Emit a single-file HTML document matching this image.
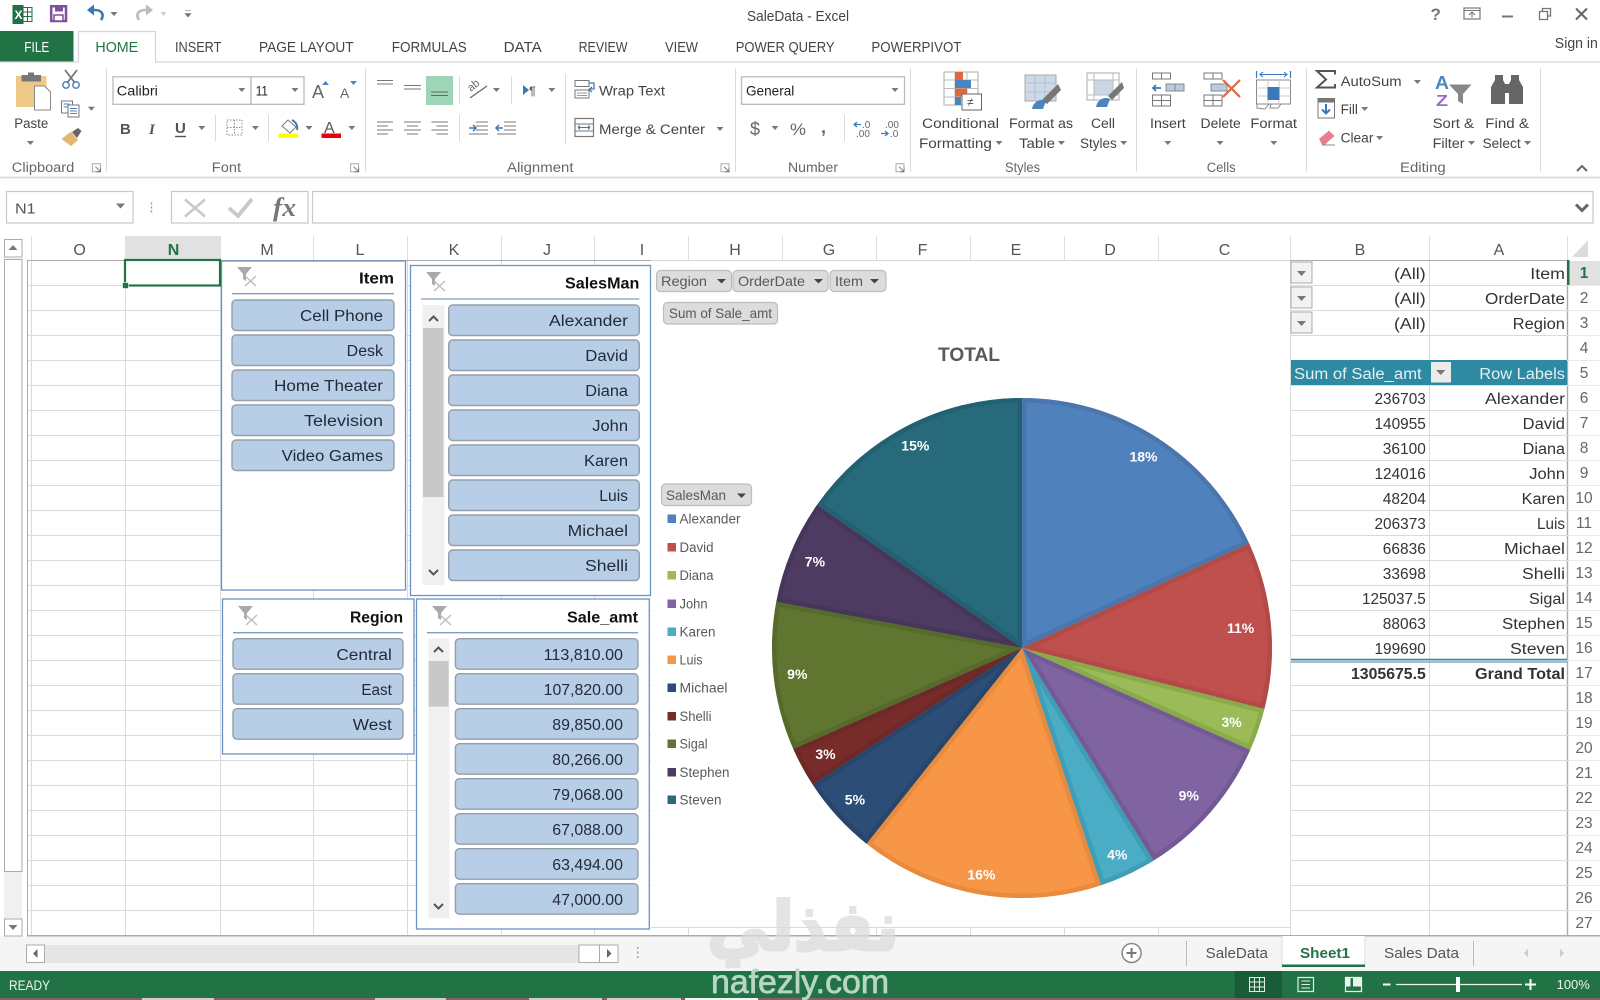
<!DOCTYPE html>
<html lang="en"><head><meta charset="utf-8"><title>SaleData - Excel</title>
<style>
html,body{margin:0;padding:0;background:#fff;width:1600px;height:1000px;overflow:hidden}
svg{display:block}
text{font-family:"Liberation Sans",sans-serif;white-space:pre}
.t{font-size:14.5px;fill:#444}
.r{font-size:13.5px;fill:#444}
.g{font-size:13.5px;fill:#666}
.c{font-size:15.5px;fill:#333}
.h{font-size:16px;fill:#555;text-anchor:middle}
.n{font-size:15.5px;fill:#666;text-anchor:middle}
.b{font-size:15.5px;fill:#222b3b}
.sh{font-size:15.5px;font-weight:bold;fill:#111}
.pb{font-size:14px;fill:#595959}
.l{font-size:13.5px;fill:#595959}
.p{font-size:14px;font-weight:bold;fill:#fff;text-anchor:middle}
.btn{fill:#b8cde6;stroke:#949fab;stroke-width:1.4}
.gb{fill:#dcdcdc;stroke:#bdbdbd;stroke-width:1.2}
.i{fill:none;stroke:#777;stroke-width:1.3}
</style></head><body>
<svg width="1600" height="1000" viewBox="0 0 1600 1000" xmlns="http://www.w3.org/2000/svg">
<defs>
<path id="dn" d="M-3.5-2h7L0 2z" fill="#777"/>
<g id="fl"><path d="M0 0H15L9 7V14L6 12V7Z" fill="#a9a9a9"/><path d="M8 9L19 19M19 9L8 19" stroke="#bdbdbd" stroke-width="1.4"/></g>
<g id="lnch"><path d="M-4-4H4V4H-4Z" fill="none" stroke="#aaa"/><path d="M-1-1L4 4M4 0V4H0" stroke="#777" fill="none"/></g>
<g id="fb"><rect width="21" height="21" fill="#f2f2f2" stroke="#ababab"/><path d="M6 9h9l-4.500 5z" fill="#777"/></g>
<path id="p1" d="M1022 648L1022 398A250 250 0 0 1 1249.1 543.4Z"/>
<path id="p2" d="M1022 648L1249.1 543.4A250 250 0 0 1 1264.4 709Z"/>
<path id="p3" d="M1022 648L1264.4 709A250 250 0 0 1 1250.2 750Z"/>
<path id="p4" d="M1022 648L1250.2 750A250 250 0 0 1 1153.5 860.6Z"/>
<path id="p5" d="M1022 648L1153.5 860.6A250 250 0 0 1 1101.1 885.2Z"/>
<path id="p6" d="M1022 648L1101.1 885.2A250 250 0 0 1 866.5 843.7Z"/>
<path id="p7" d="M1022 648L866.500 843.7A250 250 0 0 1 812.6 784.5Z"/>
<path id="p8" d="M1022 648L812.6 784.5A250 250 0 0 1 793.3 749Z"/>
<path id="p9" d="M1022 648L793.3 749A250 250 0 0 1 776.3 601.7Z"/>
<path id="p10" d="M1022 648L776.3 601.7A250 250 0 0 1 817.1 504.8Z"/>
<path id="p11" d="M1022 648L817.1 504.8A250 250 0 0 1 1022 398Z"/>
<clipPath id="c1"><use href="#p1"/></clipPath><clipPath id="c2"><use href="#p2"/></clipPath><clipPath id="c3"><use href="#p3"/></clipPath><clipPath id="c4"><use href="#p4"/></clipPath><clipPath id="c5"><use href="#p5"/></clipPath><clipPath id="c6"><use href="#p6"/></clipPath><clipPath id="c7"><use href="#p7"/></clipPath><clipPath id="c8"><use href="#p8"/></clipPath><clipPath id="c9"><use href="#p9"/></clipPath><clipPath id="c10"><use href="#p10"/></clipPath><clipPath id="c11"><use href="#p11"/></clipPath>
</defs>
<rect width="1600" height="1000" fill="#fff"/>

<!-- title bar icons -->
<rect x="12.500" y="5" width="11" height="19" fill="#1f7244"/><rect x="23" y="7.500" width="9" height="14" fill="#fff" stroke="#1f7244"/><path d="M23 12h9M23 16.500h9M27.500 7.500v14" stroke="#1f7244"/>
<text x="14.500" y="19" style="font-size:12px;font-weight:bold;fill:#fff">X</text>
<path d="M51.200 6.200H66V21H51.200Z" fill="#fff" stroke="#7f4f9f" stroke-width="2.500"/><rect x="55" y="6" width="8" height="5.500" fill="#7f4f9f"/><rect x="54" y="15" width="9" height="6" fill="#fff" stroke="#7f4f9f" stroke-width="1.500"/>
<path d="M101 20C105 14 101 10 95 10H90" fill="none" stroke="#3b78b5" stroke-width="2.600"/><path d="M87 10L94 4.500V15.500Z" fill="#3b78b5"/>
<use href="#dn" x="114" y="14"/>
<path d="M139 20C135 14 139 10 145 10H150" fill="none" stroke="#bbb" stroke-width="2.600"/><path d="M153 10L146 4.500V15.500Z" fill="#bbb"/>
<path d="M160.500 12h6l-3 4z" fill="#ccc"/>
<path d="M185 10.500h6M185 13.500h6l-3 3.500z" fill="#777" stroke="#777" stroke-width=".6"/>
<text x="747" y="21" class="t" textLength="102" lengthAdjust="spacingAndGlyphs">SaleData - Excel</text>

<text x="1430.500" y="20" style="font-size:17px;font-weight:bold;fill:#777">?</text>
<rect x="1464" y="8" width="16" height="11" fill="none" stroke="#777" stroke-width="1.200"/><path d="M1464 10.500H1480" stroke="#777"/><path d="M1472 17.500V12.500M1469 15l3-3 3 3" stroke="#777" fill="none"/>
<rect x="1502" y="15.500" width="11" height="2" fill="#777"/>
<rect x="1539.500" y="11.500" width="8" height="8" fill="#fff" stroke="#777" stroke-width="1.300"/><path d="M1542.500 11V8.500H1550.500V16H1548" fill="none" stroke="#777" stroke-width="1.300"/>
<path d="M1576 8.500L1587 19.500M1587 8.500L1576 19.500" stroke="#666" stroke-width="2"/>

<!-- tabs -->
<rect x="0" y="31" width="73.500" height="31" fill="#217346"/>
<text x="24.300" y="52" style="font-size:14.500px;fill:#fff" textLength="25" lengthAdjust="spacingAndGlyphs">FILE</text>
<path d="M0 62H1600" stroke="#d4d4d4" stroke-width="1.300"/>
<path d="M78.500 62V31.500H155.500V62" fill="#fff" stroke="#d4d4d4" stroke-width="1.200"/><rect x="79" y="60" width="76" height="3" fill="#fff"/>
<text x="95.400" y="52" style="font-size:14.500px;fill:#217346" textLength="42.800" lengthAdjust="spacingAndGlyphs">HOME</text>
<text x="175" y="52" class="t" textLength="46.400" lengthAdjust="spacingAndGlyphs">INSERT</text>
<text x="259" y="52" class="t" textLength="94.600" lengthAdjust="spacingAndGlyphs">PAGE LAYOUT</text>
<text x="391.800" y="52" class="t" textLength="75" lengthAdjust="spacingAndGlyphs">FORMULAS</text>
<text x="503.600" y="52" class="t" textLength="38.200" lengthAdjust="spacingAndGlyphs">DATA</text>
<text x="578.600" y="52" class="t" textLength="48.900" lengthAdjust="spacingAndGlyphs">REVIEW</text>
<text x="665" y="52" class="t" textLength="33" lengthAdjust="spacingAndGlyphs">VIEW</text>
<text x="735.700" y="52" class="t" textLength="98.900" lengthAdjust="spacingAndGlyphs">POWER QUERY</text>
<text x="871.400" y="52" class="t" textLength="90" lengthAdjust="spacingAndGlyphs">POWERPIVOT</text>
<text x="1554.800" y="48" class="t" textLength="43.100" lengthAdjust="spacingAndGlyphs">Sign in</text>

<!-- ribbon separators -->
<path d="M106.500 68V172M365.500 68V172M735.500 68V172M910.500 68V172M1136.500 68V172M1306.500 68V172M1540.500 68V172" stroke="#dcdcdc"/>
<path d="M215.500 115V141M268.500 115V141M459.500 76V104M459.500 115V141M511.500 76V104M565.500 74V144M844.500 115V141" stroke="#dcdcdc"/>
<path d="M0 177.500H1600" stroke="#d9d9d9" stroke-width="1.800"/>

<!-- clipboard -->
<rect x="16" y="76" width="30.500" height="31" rx="1" fill="#edc987"/><rect x="21.500" y="75" width="19.500" height="6.500" fill="#777"/><rect x="28" y="72.500" width="6" height="4" fill="#777"/>
<path d="M34.500 86H44.500L50.500 92V110H34.500Z" fill="#fff" stroke="#888"/>
<text x="14.300" y="128" class="r" textLength="33.900" lengthAdjust="spacingAndGlyphs">Paste</text>
<use href="#dn" x="30.400" y="143"/>
<path d="M65 70L75 83M77 70L67 83" stroke="#777" stroke-width="1.800"/><circle cx="66" cy="85" r="3.200" fill="none" stroke="#4c84bd" stroke-width="1.500"/><circle cx="76" cy="85" r="3.200" fill="none" stroke="#4c84bd" stroke-width="1.500"/>
<rect x="61.500" y="101" width="11" height="12" fill="#fff" stroke="#777"/><rect x="68" y="105" width="11" height="12" fill="#fff" stroke="#777"/><path d="M70 108.500h7M70 111h7M70 113.500h7M63.500 104h6M63.500 107h4" stroke="#4c84bd"/>
<use href="#dn" x="91.400" y="108.700"/>
<path d="M61.500 139L71 131.500L78 140L71 146Z" fill="#e2b772"/><path d="M72 132L78 128L81.500 131L77 138Z" fill="#666"/>
<text x="11.800" y="172" class="g" textLength="62.500" lengthAdjust="spacingAndGlyphs">Clipboard</text>
<use href="#lnch" x="96.400" y="167.700"/>

<!-- font -->
<rect x="113" y="76.800" width="138" height="27.500" fill="#fff" stroke="#bbb" stroke-width="1.300"/>
<rect x="251" y="76.800" width="53" height="27.500" fill="#fff" stroke="#bbb" stroke-width="1.300"/>
<text x="116.800" y="95.500" style="font-size:14px;fill:#222" textLength="41.100" lengthAdjust="spacingAndGlyphs">Calibri</text>
<text x="255.700" y="95.500" style="font-size:14px;fill:#222" textLength="12.200" lengthAdjust="spacingAndGlyphs">11</text>
<use href="#dn" x="241.800" y="90"/><use href="#dn" x="295" y="90"/>
<text x="312" y="98" style="font-size:18px;fill:#666">A</text><path d="M322 85h7l-3.500-4z" fill="#4c84bd"/>
<text x="340" y="98" style="font-size:14px;fill:#666">A</text><path d="M350 81h7l-3.500 4z" fill="#4c84bd"/>
<text x="120" y="134" style="font-size:15px;font-weight:bold;fill:#555">B</text>
<text x="149" y="134" style="font-size:15px;font-style:italic;font-family:'Liberation Serif',serif;font-weight:bold;fill:#555">I</text>
<text x="175" y="133" style="font-size:15px;font-weight:bold;fill:#555">U</text><path d="M175 136.500h11" stroke="#555" stroke-width="1.400"/>
<use href="#dn" x="201.800" y="128"/>
<rect x="227" y="120" width="15" height="15" fill="none" stroke="#888" stroke-dasharray="1.500 1.500"/><path d="M234.500 120V135M227 127.500H242" stroke="#888" stroke-dasharray="1.500 1.500"/>
<use href="#dn" x="255.400" y="128"/>
<path d="M282 126L288 120L296 127L290 133Z" fill="#fff" stroke="#777"/><path d="M292 120C296 122 298 126 297 130" fill="none" stroke="#3b78b5" stroke-width="2"/>
<rect x="278.500" y="133.500" width="19.500" height="4.500" fill="#ffff00"/>
<use href="#dn" x="309" y="128"/>
<text x="324" y="133" style="font-size:16px;fill:#555">A</text><rect x="321.500" y="133.500" width="19.500" height="4.500" fill="#e8000f"/>
<use href="#dn" x="351.800" y="128"/>
<text x="211.800" y="172" class="g" textLength="29.200" lengthAdjust="spacingAndGlyphs">Font</text>
<use href="#lnch" x="354.600" y="167.700"/>

<!-- alignment -->
<path d="M377 80.500h16M377 84h16" stroke="#777" stroke-width="1.100"/>
<path d="M404 85.500h17M404 89h17" stroke="#777" stroke-width="1.100"/>
<rect x="426" y="76" width="27" height="29" fill="#9fd5b7"/><path d="M431 92h17M431 95.500h17" stroke="#666" stroke-width="1.100"/>
<text transform="translate(471 92) rotate(-40)" style="font-size:11px;fill:#666">ab</text><path d="M470 98L487 86" stroke="#666" stroke-width="1.300"/>
<use href="#dn" x="496.400" y="90"/>
<path d="M523 85V95L529 90Z" fill="#3b78b5"/><text x="529" y="95" style="font-size:12px;fill:#666;font-weight:bold">¶</text>
<use href="#dn" x="551.800" y="90"/>
<path d="M377 122h16M377 126h11M377 130h16M377 134h11" stroke="#777" stroke-width="1.100"/>
<path d="M404 122h17M407 126h11M404 130h17M407 134h11" stroke="#777" stroke-width="1.100"/>
<path d="M431.500 122h16.500M436.500 126h11.500M431.500 130h16.500M436.500 134h11.500" stroke="#777" stroke-width="1.100"/>
<path d="M476 122h12M476 126h12M476 130h12M469 134h19" stroke="#777" stroke-width="1.100"/><path d="M469 128h6M473 125l3 3-3 3" stroke="#3b78b5" stroke-width="1.500" fill="none"/>
<path d="M504 122h12M504 126h12M504 130h12M497 134h19" stroke="#777" stroke-width="1.100"/><path d="M497 128h6M499 125l-3 3 3 3" stroke="#3b78b5" stroke-width="1.500" fill="none"/>
<rect x="575" y="80.500" width="14" height="6" fill="#fff" stroke="#777"/><rect x="575" y="90" width="14" height="8" fill="#fff" stroke="#777"/><path d="M577 93h10M577 95.500h10" stroke="#999"/><path d="M589 83h5v6h-4M592 87l-3 2.500 3 2.500" fill="none" stroke="#3b78b5" stroke-width="1.300"/>
<text x="599" y="95.500" class="r" textLength="66" lengthAdjust="spacingAndGlyphs">Wrap Text</text>
<rect x="575" y="118.500" width="18.500" height="18" fill="#fff" stroke="#777" stroke-width="1.200"/><path d="M575 124h18.500M575 131h18.500" stroke="#777"/><path d="M578 127.500h12M578 127.500l2-2m-2 2l2 2M590 127.500l-2-2m2 2l-2 2" stroke="#3b78b5"/>
<text x="599" y="134" class="r" textLength="106" lengthAdjust="spacingAndGlyphs">Merge &amp; Center</text>
<use href="#dn" x="720" y="129"/>
<text x="507" y="172" class="g" textLength="66.500" lengthAdjust="spacingAndGlyphs">Alignment</text>
<use href="#lnch" x="725" y="167.700"/>

<!-- number -->
<rect x="741.500" y="76.800" width="163" height="27.500" fill="#fff" stroke="#bbb" stroke-width="1.300"/>
<text x="746" y="95.500" style="font-size:14px;fill:#222" textLength="48.300" lengthAdjust="spacingAndGlyphs">General</text>
<use href="#dn" x="895" y="90"/>
<text x="750" y="135" style="font-size:18px;fill:#666">$</text><use href="#dn" x="775" y="128"/>
<text x="790" y="135" style="font-size:17px;fill:#666" textLength="16" lengthAdjust="spacingAndGlyphs">%</text>
<text x="821" y="133" style="font-size:18px;font-weight:bold;fill:#666">,</text>
<text x="862" y="128" style="font-size:10px;fill:#666">.0</text><text x="856" y="137" style="font-size:10px;fill:#666">.00</text><path d="M854 124.500h7M857 122l-3 2.500 3 2.500" stroke="#3b78b5" fill="none" stroke-width="1.200"/>
<text x="885" y="128" style="font-size:10px;fill:#666">.00</text><text x="890" y="137" style="font-size:10px;fill:#666">.0</text><path d="M881 133.500h7M885 131l3 2.500-3 2.500" stroke="#3b78b5" fill="none" stroke-width="1.200"/>
<text x="788" y="172" class="g" textLength="50" lengthAdjust="spacingAndGlyphs">Number</text>
<use href="#lnch" x="900" y="167.700"/>

<!-- styles -->
<rect x="944" y="72" width="34" height="33" fill="#fff" stroke="#aaa"/><path d="M955 72V105M967 72V105M944 80h34M944 88.500h34M944 97h34" stroke="#bbb"/>
<rect x="955" y="72" width="8" height="8" fill="#e0683f"/><rect x="955" y="80" width="16" height="8" fill="#4c84bd"/><rect x="955" y="88.500" width="12" height="8" fill="#e0683f"/><rect x="955" y="97" width="6" height="8" fill="#4c84bd"/>
<rect x="962" y="94" width="19.500" height="16" fill="#fff" stroke="#666"/><text x="967" y="106" style="font-size:12px;fill:#555">≠</text>
<text x="922" y="128" class="r" textLength="77" lengthAdjust="spacingAndGlyphs">Conditional</text>
<text x="919" y="148" class="r" textLength="72.800" lengthAdjust="spacingAndGlyphs">Formatting</text><use href="#dn" x="999" y="143"/>
<rect x="1025" y="75" width="31" height="26" fill="#ccd9e8" stroke="#aaa"/><path d="M1035 75V101M1045 75V101M1025 83h31M1025 92h31" stroke="#b7c1cf"/>
<path d="M1058 84L1042 100L1047 104L1061 90Z" fill="#777"/><path d="M1032 109C1033 102 1040 98 1046 101L1043 109Z" fill="#4c84bd"/>
<text x="1009" y="128" class="r" textLength="64" lengthAdjust="spacingAndGlyphs">Format as</text>
<text x="1019" y="148" class="r" textLength="36" lengthAdjust="spacingAndGlyphs">Table</text><use href="#dn" x="1061.400" y="143"/>
<rect x="1087" y="73" width="32" height="27" fill="#fff" stroke="#aaa"/><rect x="1094" y="80" width="19" height="15" fill="#c8d6e6"/><path d="M1094 73V100M1113 73V100M1087 80h32M1087 95h32" stroke="#bbb"/>
<path d="M1122 82L1108 96L1112 100L1124 88Z" fill="#777"/><path d="M1096 107C1097 100 1104 96 1110 99L1107 107Z" fill="#4c84bd"/>
<text x="1091" y="128" class="r" textLength="24" lengthAdjust="spacingAndGlyphs">Cell</text>
<text x="1080" y="148" class="r" textLength="36.800" lengthAdjust="spacingAndGlyphs">Styles</text><use href="#dn" x="1123.700" y="143"/>
<text x="1005" y="172" class="g" textLength="35" lengthAdjust="spacingAndGlyphs">Styles</text>

<!-- cells -->
<path d="M1152.500 73h18v6h-18zM1161.500 73v6M1152.500 95h18v11h-18zM1161.500 95v11M1152.500 100.500h18" fill="#fff" stroke="#777"/>
<rect x="1166" y="84" width="18" height="7" fill="#b9cbe0" stroke="#888"/><path d="M1175 84v7" stroke="#888"/><path d="M1153 88h8M1156 85l-3 3 3 3" fill="none" stroke="#3b78b5" stroke-width="1.800"/>
<text x="1150" y="128" class="r" textLength="35.700" lengthAdjust="spacingAndGlyphs">Insert</text><use href="#dn" x="1167.800" y="143"/>
<path d="M1204 73h18v6h-18zM1213 73v6M1204 95h18v11h-18zM1213 95v11M1204 100.500h18" fill="#fff" stroke="#777"/>
<rect x="1211" y="84" width="16" height="7" fill="#b9cbe0" stroke="#888"/><path d="M1223 80L1240 97M1240 80L1223 97" stroke="#e0683f" stroke-width="2.200"/>
<text x="1200.500" y="128" class="r" textLength="40.300" lengthAdjust="spacingAndGlyphs">Delete</text><use href="#dn" x="1220" y="143"/>
<path d="M1256.500 71v7M1290.500 71v7" stroke="#3b78b5" stroke-width="1.200"/><path d="M1260 74.500h27M1263 72l-3 2.500 3 2.500M1284 72l3 2.500-3 2.500" stroke="#3b78b5" fill="none" stroke-width="1.100"/>
<rect x="1256.500" y="80" width="34" height="24" fill="#fff" stroke="#888"/><path d="M1268 80V104M1279 80V104M1256.500 88h34M1256.500 96h34" stroke="#ccc"/><rect x="1267.500" y="87" width="12" height="13" fill="#3b78b5"/>
<path d="M1257 104v4l8 1 4-5M1271 104l-1 4h8l3-4" fill="none" stroke="#888"/>
<text x="1250.400" y="128" class="r" textLength="46.600" lengthAdjust="spacingAndGlyphs">Format</text><use href="#dn" x="1273.800" y="143"/>
<text x="1206.700" y="172" class="g" textLength="28.900" lengthAdjust="spacingAndGlyphs">Cells</text>

<!-- editing -->
<path d="M1335 74.500V71H1317L1326 79.500L1317 87.500H1335V84" fill="none" stroke="#555" stroke-width="2"/>
<text x="1340.600" y="86" class="r" textLength="61" lengthAdjust="spacingAndGlyphs">AutoSum</text><use href="#dn" x="1417.400" y="82"/>
<rect x="1318" y="98.500" width="16.500" height="19.500" fill="#fff" stroke="#777"/><rect x="1318" y="98.500" width="16.500" height="4" fill="#777"/><path d="M1326 104v9M1322 109.500l4 4 4-4" fill="none" stroke="#3b78b5" stroke-width="2"/>
<text x="1340.600" y="114" class="r" textLength="17.300" lengthAdjust="spacingAndGlyphs">Fill</text><use href="#dn" x="1364.700" y="109"/>
<path d="M1319 139L1329 130.500L1334.500 136L1325 144.500H1322Z" fill="#e97d92"/><path d="M1322 145h13" stroke="#888"/>
<text x="1340.600" y="142.500" class="r" textLength="32.800" lengthAdjust="spacingAndGlyphs">Clear</text><use href="#dn" x="1379.600" y="138"/>
<text x="1435" y="89" style="font-size:18px;font-weight:bold;fill:#4c84bd" textLength="14" lengthAdjust="spacingAndGlyphs">A</text>
<text x="1436" y="106" style="font-size:16px;font-weight:bold;fill:#9b6cc0" textLength="12" lengthAdjust="spacingAndGlyphs">Z</text>
<path d="M1449 84.500H1471.500L1463 94V104L1458 101V94Z" fill="#888"/>
<text x="1432.600" y="128" class="r" textLength="41.400" lengthAdjust="spacingAndGlyphs">Sort &amp;</text>
<text x="1432.600" y="148" class="r" textLength="32" lengthAdjust="spacingAndGlyphs">Filter</text><use href="#dn" x="1471.500" y="143"/>
<path d="M1491 104V87L1495 80V75H1503V80L1505 84V104ZM1509 104V84L1511 80V75H1519V80L1523 87V104Z" fill="#666"/><rect x="1505" y="84" width="4" height="9" fill="#666"/>
<text x="1485.300" y="128" class="r" textLength="43.700" lengthAdjust="spacingAndGlyphs">Find &amp;</text>
<text x="1482.500" y="148" class="r" textLength="38.200" lengthAdjust="spacingAndGlyphs">Select</text><use href="#dn" x="1527.600" y="143"/>
<text x="1400" y="172" class="g" textLength="45.700" lengthAdjust="spacingAndGlyphs">Editing</text>
<path d="M1577 171l5-5 5 5" fill="none" stroke="#666" stroke-width="2"/>

<!-- formula bar -->
<rect x="6.500" y="191.500" width="126.500" height="31.500" fill="#fff" stroke="#c8c8c8" stroke-width="1.200"/>
<text x="15" y="213.500" style="font-size:15px;fill:#555" textLength="20.700" lengthAdjust="spacingAndGlyphs">N1</text>
<path d="M116 203.500h9l-4.500 5z" fill="#777"/>
<path d="M151.500 202.500v2M151.500 206.500v2M151.500 210.500v2" stroke="#999" stroke-width="1.400"/>
<rect x="171.500" y="191.500" width="136.500" height="31.500" fill="#fff" stroke="#c8c8c8" stroke-width="1.200"/>
<path d="M185 199.500L205 216.500M205 199.500L185 216.500" stroke="#c8c8c8" stroke-width="2.600"/>
<path d="M229 208L238 216L252 199" fill="none" stroke="#c8c8c8" stroke-width="3.800"/>
<text x="273" y="216" style="font-family:'Liberation Serif',serif;font-style:italic;font-weight:bold;font-size:26px;fill:#777" textLength="23" lengthAdjust="spacingAndGlyphs">fx</text>
<rect x="312.500" y="191.500" width="1280.500" height="31.500" fill="#fff" stroke="#c8c8c8" stroke-width="1.200"/>
<path d="M1576 204.500l6 6 6-6" fill="none" stroke="#666" stroke-width="3"/>

<!-- column headers -->
<rect x="125" y="236" width="95" height="24" fill="#e1e1e1"/>
<path d="M31.500 236V260M125.500 236V260M220.500 236V260M313.500 236V260M407.500 236V260M501.500 236V260M594.500 236V260M688.500 236V260M782.500 236V260M876.500 236V260M970.500 236V260M1064.500 236V260M1158.500 236V260M1290.500 236V260M1429.500 236V260M1567.500 236V260" stroke="#dedede"/>
<text x="79.600" y="255" class="h">O</text><text x="173.500" y="255" class="h" style="font-weight:bold;fill:#217346">N</text><text x="267" y="255" class="h">M</text><text x="360" y="255" class="h">L</text><text x="454" y="255" class="h">K</text><text x="547" y="255" class="h">J</text><text x="642" y="255" class="h">I</text><text x="735" y="255" class="h">H</text><text x="829" y="255" class="h">G</text><text x="922.500" y="255" class="h">F</text><text x="1016" y="255" class="h">E</text><text x="1110" y="255" class="h">D</text><text x="1224.500" y="255" class="h">C</text><text x="1360" y="255" class="h">B</text><text x="1499" y="255" class="h">A</text>
<path d="M1572 257H1588V240Z" fill="#dcdcdc"/>

<!-- grid -->
<path d="M27 285.500H1567M27 310.500H1567M27 335.500H1567M27 360.500H1567M27 385.500H1567M27 410.500H1567M27 435.500H1567M27 460.500H1567M27 485.500H1567M27 510.500H1567M27 535.500H1567M27 560.500H1567M27 585.500H1567M27 610.500H1567M27 635.500H1567M27 660.500H1567M27 685.500H1567M27 710.500H1567M27 735.500H1567M27 760.500H1567M27 785.500H1567M27 810.500H1567M27 835.500H1567M27 860.500H1567M27 885.500H1567M27 910.500H1567" stroke="#dadada"/>
<path d="M31.500 260V935M125.500 260V935M220.500 260V935M313.500 260V935M407.500 260V935M501.500 260V935M594.500 260V935M688.500 260V935M782.500 260V935M876.500 260V935M970.500 260V935M1064.500 260V935M1158.500 260V935M1290.500 260V935M1429.500 260V935" stroke="#dadada"/>
<path d="M27.500 260V936" stroke="#ababab"/>
<path d="M27 260.500H1567" stroke="#ababab"/>
<path d="M1567.500 260V936" stroke="#ababab" stroke-width="1.400"/>
<path d="M27 935.800H1600" stroke="#ababab" stroke-width="1.500"/>
<!-- left scrollbar -->
<rect x="4" y="258" width="18" height="661" fill="#f0f0f0"/>
<rect x="4.500" y="259.500" width="17.500" height="612" fill="#fff" stroke="#ababab"/>
<rect x="4.500" y="239.500" width="17.500" height="17.500" fill="#fff" stroke="#ababab"/><path d="M8.500 250h9L13 245z" fill="#777"/>
<rect x="4.500" y="919" width="17.500" height="17" fill="#fff" stroke="#ababab"/><path d="M8.500 925h9L13 930z" fill="#777"/>

<!-- row headers -->
<path d="M1567 285.500H1600M1567 310.500H1600M1567 335.500H1600M1567 360.500H1600M1567 385.500H1600M1567 410.500H1600M1567 435.500H1600M1567 460.500H1600M1567 485.500H1600M1567 510.500H1600M1567 535.500H1600M1567 560.500H1600M1567 585.500H1600M1567 610.500H1600M1567 635.500H1600M1567 660.500H1600M1567 685.500H1600M1567 710.500H1600M1567 735.500H1600M1567 760.500H1600M1567 785.500H1600M1567 810.500H1600M1567 835.500H1600M1567 860.500H1600M1567 885.500H1600M1567 910.500H1600" stroke="#eaeaea"/>
<rect x="1568" y="261" width="32" height="24" fill="#e1e1e1"/><rect x="1567" y="260" width="2.500" height="25" fill="#217346"/>
<text x="1584" y="278" class="n" style="font-weight:bold;fill:#217346">1</text>
<text x="1584" y="303" class="n">2</text><text x="1584" y="328" class="n">3</text><text x="1584" y="353" class="n">4</text><text x="1584" y="378" class="n">5</text><text x="1584" y="403" class="n">6</text><text x="1584" y="428" class="n">7</text><text x="1584" y="453" class="n">8</text><text x="1584" y="478" class="n">9</text><text x="1584" y="503" class="n">10</text><text x="1584" y="528" class="n">11</text><text x="1584" y="553" class="n">12</text><text x="1584" y="578" class="n">13</text><text x="1584" y="603" class="n">14</text><text x="1584" y="628" class="n">15</text><text x="1584" y="653" class="n">16</text><text x="1584" y="678" class="n">17</text><text x="1584" y="703" class="n">18</text><text x="1584" y="728" class="n">19</text><text x="1584" y="753" class="n">20</text><text x="1584" y="778" class="n">21</text><text x="1584" y="803" class="n">22</text><text x="1584" y="828" class="n">23</text><text x="1584" y="853" class="n">24</text><text x="1584" y="878" class="n">25</text><text x="1584" y="903" class="n">26</text><text x="1584" y="928" class="n">27</text>

<!-- pivot data -->
<use href="#fb" x="1291" y="262"/><use href="#fb" x="1291" y="287"/><use href="#fb" x="1291" y="312"/>
<text x="1394" y="279" class="c" textLength="31.700" lengthAdjust="spacingAndGlyphs">(All)</text>
<text x="1394" y="304" class="c" textLength="31.700" lengthAdjust="spacingAndGlyphs">(All)</text>
<text x="1394" y="329" class="c" textLength="31.700" lengthAdjust="spacingAndGlyphs">(All)</text>
<text x="1530.300" y="279" class="c" textLength="34.700" lengthAdjust="spacingAndGlyphs">Item</text>
<text x="1485" y="304" class="c" textLength="80" lengthAdjust="spacingAndGlyphs">OrderDate</text>
<text x="1512.700" y="329" class="c" textLength="52.300" lengthAdjust="spacingAndGlyphs">Region</text>
<rect x="1291" y="360" width="276" height="25" fill="#2e8aa3"/>
<text x="1294" y="379" style="font-size:15.5px;fill:#e4f0f4" textLength="127.700" lengthAdjust="spacingAndGlyphs">Sum of Sale_amt</text>
<rect x="1431" y="362" width="20" height="20.500" fill="#ececec"/><path d="M1436 370h9.500l-4.750 5z" fill="#777"/>
<text x="1479.300" y="379" style="font-size:15.5px;fill:#e4f0f4" textLength="85.700" lengthAdjust="spacingAndGlyphs">Row Labels</text>
<text x="1374.500" y="404" class="c" textLength="51.300" lengthAdjust="spacingAndGlyphs">236703</text><text x="1485" y="404" class="c" textLength="80" lengthAdjust="spacingAndGlyphs">Alexander</text>
<text x="1374.500" y="429" class="c" textLength="51.300" lengthAdjust="spacingAndGlyphs">140955</text><text x="1522.700" y="429" class="c" textLength="42.300" lengthAdjust="spacingAndGlyphs">David</text>
<text x="1382.800" y="454" class="c" textLength="43" lengthAdjust="spacingAndGlyphs">36100</text><text x="1522.700" y="454" class="c" textLength="42.300" lengthAdjust="spacingAndGlyphs">Diana</text>
<text x="1374.500" y="479" class="c" textLength="51.300" lengthAdjust="spacingAndGlyphs">124016</text><text x="1529.300" y="479" class="c" textLength="35.700" lengthAdjust="spacingAndGlyphs">John</text>
<text x="1382.800" y="504" class="c" textLength="43" lengthAdjust="spacingAndGlyphs">48204</text><text x="1521.700" y="504" class="c" textLength="43.300" lengthAdjust="spacingAndGlyphs">Karen</text>
<text x="1374.500" y="529" class="c" textLength="51.300" lengthAdjust="spacingAndGlyphs">206373</text><text x="1537" y="529" class="c" textLength="28" lengthAdjust="spacingAndGlyphs">Luis</text>
<text x="1382.800" y="554" class="c" textLength="43" lengthAdjust="spacingAndGlyphs">66836</text><text x="1504" y="554" class="c" textLength="61" lengthAdjust="spacingAndGlyphs">Michael</text>
<text x="1382.800" y="579" class="c" textLength="43" lengthAdjust="spacingAndGlyphs">33698</text><text x="1522" y="579" class="c" textLength="43" lengthAdjust="spacingAndGlyphs">Shelli</text>
<text x="1362" y="604" class="c" textLength="63.800" lengthAdjust="spacingAndGlyphs">125037.5</text><text x="1529" y="604" class="c" textLength="36" lengthAdjust="spacingAndGlyphs">Sigal</text>
<text x="1382.800" y="629" class="c" textLength="43" lengthAdjust="spacingAndGlyphs">88063</text><text x="1502" y="629" class="c" textLength="63" lengthAdjust="spacingAndGlyphs">Stephen</text>
<text x="1374.500" y="654" class="c" textLength="51.300" lengthAdjust="spacingAndGlyphs">199690</text><text x="1510" y="654" class="c" textLength="55" lengthAdjust="spacingAndGlyphs">Steven</text>
<path d="M1291 659.500H1567" stroke="#2e8aa3" stroke-width="1.400"/><path d="M1291 662H1567" stroke="#2e8aa3"/>
<text x="1351" y="679" class="c" style="font-weight:bold" textLength="74.800" lengthAdjust="spacingAndGlyphs">1305675.5</text><text x="1475" y="679" class="c" style="font-weight:bold" textLength="90" lengthAdjust="spacingAndGlyphs">Grand Total</text>

<!-- chart -->
<rect x="651" y="260.500" width="639" height="667" fill="#fff"/>
<path d="M651 927.500H1290" stroke="#dadada"/>
<use href="#p1" fill="#4f81bd" stroke="#4a76ad" stroke-width="9" clip-path="url(#c1)"/>
<use href="#p2" fill="#c0504d" stroke="#b24a47" stroke-width="9" clip-path="url(#c2)"/>
<use href="#p3" fill="#9bbb59" stroke="#8bab4b" stroke-width="9" clip-path="url(#c3)"/>
<use href="#p4" fill="#8064a2" stroke="#745a94" stroke-width="9" clip-path="url(#c4)"/>
<use href="#p5" fill="#4bacc6" stroke="#3f9db6" stroke-width="9" clip-path="url(#c5)"/>
<use href="#p6" fill="#f79646" stroke="#e88b3e" stroke-width="9" clip-path="url(#c6)"/>
<use href="#p7" fill="#2c4d75" stroke="#28466b" stroke-width="9" clip-path="url(#c7)"/>
<use href="#p8" fill="#772c2a" stroke="#6d2927" stroke-width="9" clip-path="url(#c8)"/>
<use href="#p9" fill="#5f7530" stroke="#566b2b" stroke-width="9" clip-path="url(#c9)"/>
<use href="#p10" fill="#4d3b62" stroke="#463659" stroke-width="9" clip-path="url(#c10)"/>
<use href="#p11" fill="#276a7c" stroke="#236071" stroke-width="9" clip-path="url(#c11)"/>
<text x="1143.500" y="461.500" class="p">18%</text><text x="1240.600" y="633" class="p">11%</text><text x="1231.600" y="727" class="p">3%</text><text x="1188.800" y="800.500" class="p">9%</text><text x="1117.300" y="859.500" class="p">4%</text><text x="981.400" y="879.500" class="p">16%</text><text x="854.900" y="804.500" class="p">5%</text><text x="825.500" y="759" class="p">3%</text><text x="797.300" y="679" class="p">9%</text><text x="814.900" y="566.500" class="p">7%</text><text x="915.300" y="450.500" class="p">15%</text>
<text x="938" y="361" style="font-size:19px;font-weight:bold;fill:#595959" textLength="62" lengthAdjust="spacingAndGlyphs">TOTAL</text>

<!-- chart field buttons -->
<rect x="656.500" y="270.500" width="75" height="21" rx="4" class="gb"/><text x="661" y="286" class="pb" textLength="46" lengthAdjust="spacingAndGlyphs">Region</text><path d="M717 279h9l-4.500 4.500z" fill="#444"/>
<rect x="733" y="270.500" width="95" height="21" rx="4" class="gb"/><text x="738" y="286" class="pb" textLength="67" lengthAdjust="spacingAndGlyphs">OrderDate</text><path d="M814 279h9l-4.500 4.500z" fill="#444"/>
<rect x="830" y="270.500" width="56" height="21" rx="4" class="gb"/><text x="835" y="286" class="pb" textLength="28" lengthAdjust="spacingAndGlyphs">Item</text><path d="M870 279h9l-4.500 4.500z" fill="#444"/>
<rect x="663.500" y="302.500" width="114" height="21.500" rx="4" class="gb"/><text x="669" y="318" class="pb" textLength="103" lengthAdjust="spacingAndGlyphs">Sum of Sale_amt</text>
<rect x="661.500" y="484" width="90" height="21.500" rx="4" class="gb"/><text x="666" y="500" class="pb" textLength="60" lengthAdjust="spacingAndGlyphs">SalesMan</text><path d="M737 493.500h9l-4.500 4.500z" fill="#444"/>
<!-- legend -->
<rect x="667.500" y="514.500" width="8.500" height="8.500" fill="#4f81bd"/><text x="679.500" y="523.500" class="l" textLength="61" lengthAdjust="spacingAndGlyphs">Alexander</text>
<rect x="667.500" y="543" width="8.500" height="8.500" fill="#c0504d"/><text x="679.500" y="552" class="l" textLength="34" lengthAdjust="spacingAndGlyphs">David</text>
<rect x="667.500" y="571" width="8.500" height="8.500" fill="#9bbb59"/><text x="679.500" y="580" class="l" textLength="34" lengthAdjust="spacingAndGlyphs">Diana</text>
<rect x="667.500" y="599.500" width="8.500" height="8.500" fill="#8064a2"/><text x="679.500" y="608.500" class="l" textLength="28" lengthAdjust="spacingAndGlyphs">John</text>
<rect x="667.500" y="627.500" width="8.500" height="8.500" fill="#4bacc6"/><text x="679.500" y="636.500" class="l" textLength="36" lengthAdjust="spacingAndGlyphs">Karen</text>
<rect x="667.500" y="655.500" width="8.500" height="8.500" fill="#f79646"/><text x="679.500" y="664.500" class="l" textLength="23" lengthAdjust="spacingAndGlyphs">Luis</text>
<rect x="667.500" y="683.500" width="8.500" height="8.500" fill="#2c4d75"/><text x="679.500" y="692.500" class="l" textLength="48" lengthAdjust="spacingAndGlyphs">Michael</text>
<rect x="667.500" y="712" width="8.500" height="8.500" fill="#772c2a"/><text x="679.500" y="721" class="l" textLength="32" lengthAdjust="spacingAndGlyphs">Shelli</text>
<rect x="667.500" y="739.500" width="8.500" height="8.500" fill="#5f7530"/><text x="679.500" y="748.500" class="l" textLength="28" lengthAdjust="spacingAndGlyphs">Sigal</text>
<rect x="667.500" y="768" width="8.500" height="8.500" fill="#4d3b62"/><text x="679.500" y="777" class="l" textLength="50" lengthAdjust="spacingAndGlyphs">Stephen</text>
<rect x="667.500" y="795.500" width="8.500" height="8.500" fill="#276a7c"/><text x="679.500" y="804.500" class="l" textLength="42" lengthAdjust="spacingAndGlyphs">Steven</text>

<!-- slicer Item -->
<rect x="221.500" y="261" width="184" height="329" fill="#fff" stroke="#6b93c3" stroke-width="1.300"/>
<use href="#fl" x="237" y="267"/>
<text x="359" y="283.500" class="sh" textLength="35" lengthAdjust="spacingAndGlyphs">Item</text>
<path d="M232 293.700H394" stroke="#7f9ec4" stroke-width="1.300"/>
<rect x="232" y="300" width="162" height="30.500" rx="4" class="btn"/><text x="300" y="321" class="b" textLength="83" lengthAdjust="spacingAndGlyphs">Cell Phone</text>
<rect x="232" y="335" width="162" height="30.500" rx="4" class="btn"/><text x="346.700" y="356" class="b" textLength="36.300" lengthAdjust="spacingAndGlyphs">Desk</text>
<rect x="232" y="370" width="162" height="30.500" rx="4" class="btn"/><text x="274" y="391" class="b" textLength="109" lengthAdjust="spacingAndGlyphs">Home Theater</text>
<rect x="232" y="405" width="162" height="30.500" rx="4" class="btn"/><text x="304" y="426" class="b" textLength="79" lengthAdjust="spacingAndGlyphs">Television</text>
<rect x="232" y="440" width="162" height="30.500" rx="4" class="btn"/><text x="281.700" y="461" class="b" textLength="101.300" lengthAdjust="spacingAndGlyphs">Video Games</text>

<!-- slicer SalesMan -->
<rect x="410.500" y="265.500" width="240" height="330" fill="#fff" stroke="#6b93c3" stroke-width="1.300"/>
<use href="#fl" x="426" y="272"/>
<text x="565" y="288.500" class="sh" textLength="74.300" lengthAdjust="spacingAndGlyphs">SalesMan</text>
<path d="M421 299H639.300" stroke="#7f9ec4" stroke-width="1.300"/>
<rect x="422.500" y="305" width="22" height="280" fill="#f0f0f0"/><rect x="423" y="328" width="20.500" height="169" fill="#c8c8c8"/>
<path d="M429 321l4.500-4.500 4.500 4.500M429 570l4.500 4.500 4.500-4.500" fill="none" stroke="#555" stroke-width="2"/>
<rect x="448.700" y="305" width="190.600" height="30.500" rx="4" class="btn"/><text x="549" y="326" class="b" textLength="79" lengthAdjust="spacingAndGlyphs">Alexander</text>
<rect x="448.700" y="340" width="190.600" height="30.500" rx="4" class="btn"/><text x="585.300" y="361" class="b" textLength="42.700" lengthAdjust="spacingAndGlyphs">David</text>
<rect x="448.700" y="375" width="190.600" height="30.500" rx="4" class="btn"/><text x="585.300" y="396" class="b" textLength="42.700" lengthAdjust="spacingAndGlyphs">Diana</text>
<rect x="448.700" y="410" width="190.600" height="30.500" rx="4" class="btn"/><text x="592.300" y="431" class="b" textLength="35.700" lengthAdjust="spacingAndGlyphs">John</text>
<rect x="448.700" y="445" width="190.600" height="30.500" rx="4" class="btn"/><text x="584" y="466" class="b" textLength="44" lengthAdjust="spacingAndGlyphs">Karen</text>
<rect x="448.700" y="480" width="190.600" height="30.500" rx="4" class="btn"/><text x="599.300" y="501" class="b" textLength="28.700" lengthAdjust="spacingAndGlyphs">Luis</text>
<rect x="448.700" y="515" width="190.600" height="30.500" rx="4" class="btn"/><text x="567.700" y="536" class="b" textLength="60.300" lengthAdjust="spacingAndGlyphs">Michael</text>
<rect x="448.700" y="550" width="190.600" height="30.500" rx="4" class="btn"/><text x="585" y="571" class="b" textLength="43" lengthAdjust="spacingAndGlyphs">Shelli</text>

<!-- slicer Region -->
<rect x="222.500" y="599" width="191.500" height="155" fill="#fff" stroke="#6b93c3" stroke-width="1.300"/>
<use href="#fl" x="238" y="606"/>
<text x="350" y="622.500" class="sh" textLength="53" lengthAdjust="spacingAndGlyphs">Region</text>
<path d="M233 632.700H403" stroke="#7f9ec4" stroke-width="1.300"/>
<rect x="233" y="638.700" width="170" height="30.500" rx="4" class="btn"/><text x="336.400" y="660" class="b" textLength="55.400" lengthAdjust="spacingAndGlyphs">Central</text>
<rect x="233" y="673.700" width="170" height="30.500" rx="4" class="btn"/><text x="361.400" y="695" class="b" textLength="30.400" lengthAdjust="spacingAndGlyphs">East</text>
<rect x="233" y="708.700" width="170" height="30.500" rx="4" class="btn"/><text x="352.800" y="730" class="b" textLength="39" lengthAdjust="spacingAndGlyphs">West</text>

<!-- slicer Sale_amt -->
<rect x="416.500" y="599" width="232.800" height="330" fill="#fff" stroke="#6b93c3" stroke-width="1.300"/>
<use href="#fl" x="432" y="606"/>
<text x="567" y="622.500" class="sh" textLength="71" lengthAdjust="spacingAndGlyphs">Sale_amt</text>
<path d="M427 632.700H638" stroke="#7f9ec4" stroke-width="1.300"/>
<rect x="428.600" y="638.700" width="20.700" height="279.600" fill="#f0f0f0"/><rect x="428.600" y="661" width="20" height="45.700" fill="#c8c8c8"/>
<path d="M434 652l4.500-4.500 4.500 4.500M434 904l4.500 4.500 4.500-4.500" fill="none" stroke="#555" stroke-width="2"/>
<rect x="455.400" y="638.700" width="182.600" height="30.500" rx="4" class="btn"/><text x="543.700" y="660" class="b" textLength="79.300" lengthAdjust="spacingAndGlyphs">113,810.00</text>
<rect x="455.400" y="673.700" width="182.600" height="30.500" rx="4" class="btn"/><text x="543.700" y="695" class="b" textLength="79.300" lengthAdjust="spacingAndGlyphs">107,820.00</text>
<rect x="455.400" y="708.700" width="182.600" height="30.500" rx="4" class="btn"/><text x="552.300" y="730" class="b" textLength="70.700" lengthAdjust="spacingAndGlyphs">89,850.00</text>
<rect x="455.400" y="743.700" width="182.600" height="30.500" rx="4" class="btn"/><text x="552.300" y="765" class="b" textLength="70.700" lengthAdjust="spacingAndGlyphs">80,266.00</text>
<rect x="455.400" y="778.700" width="182.600" height="30.500" rx="4" class="btn"/><text x="552.300" y="800" class="b" textLength="70.700" lengthAdjust="spacingAndGlyphs">79,068.00</text>
<rect x="455.400" y="813.700" width="182.600" height="30.500" rx="4" class="btn"/><text x="552.300" y="835" class="b" textLength="70.700" lengthAdjust="spacingAndGlyphs">67,088.00</text>
<rect x="455.400" y="848.700" width="182.600" height="30.500" rx="4" class="btn"/><text x="552.300" y="870" class="b" textLength="70.700" lengthAdjust="spacingAndGlyphs">63,494.00</text>
<rect x="455.400" y="883.700" width="182.600" height="30.500" rx="4" class="btn"/><text x="552.300" y="905" class="b" textLength="70.700" lengthAdjust="spacingAndGlyphs">47,000.00</text>

<!-- selected cell -->
<rect x="125" y="260" width="95" height="25.500" fill="none" stroke="#217346" stroke-width="2.200"/>
<rect x="122.500" y="282.500" width="6" height="6" fill="#217346" stroke="#fff" stroke-width=".6"/>

<!-- bottom bar -->
<rect x="0" y="936.500" width="1600" height="34.500" fill="#f5f5f5"/>
<rect x="27" y="945" width="591" height="18" fill="#e6e6e6"/>
<rect x="26.500" y="945" width="18" height="17.500" fill="#fff" stroke="#ababab"/><path d="M37.500 949v9l-4.500-4.500z" fill="#666"/>
<rect x="579" y="945" width="20.500" height="17.500" fill="#fff" stroke="#ababab"/>
<rect x="599.500" y="945" width="18.500" height="17.500" fill="#fff" stroke="#ababab"/><path d="M607 949v9l4.500-4.500z" fill="#666"/>
<path d="M637.800 947v2M637.800 951.500v2M637.800 956v2" stroke="#999" stroke-width="1.400"/>
<circle cx="1131.600" cy="953" r="9.500" fill="#fff" stroke="#888" stroke-width="1.500"/><path d="M1126.500 953h10M1131.600 948v10" stroke="#777" stroke-width="2"/>
<path d="M1186.500 941V966M1473.500 941V966" stroke="#bbb"/>
<rect x="1282" y="936" width="83" height="29.500" fill="#fff"/><path d="M1282 936V966M1365 936V966" stroke="#ddd"/><rect x="1282" y="964.500" width="83" height="2.500" fill="#217346"/>
<text x="1205.600" y="958" style="font-size:15px;fill:#555" textLength="62.300" lengthAdjust="spacingAndGlyphs">SaleData</text>
<text x="1300" y="958" style="font-size:15px;font-weight:bold;fill:#217346" textLength="50" lengthAdjust="spacingAndGlyphs">Sheet1</text>
<text x="1384" y="958" style="font-size:15px;fill:#555" textLength="75" lengthAdjust="spacingAndGlyphs">Sales Data</text>
<path d="M1528 948.500v9l-4-4.500z" fill="#cfcfcf"/><path d="M1560 948.500v9l4-4.500z" fill="#cfcfcf"/>

<!-- status bar -->
<rect x="0" y="971" width="1600" height="27" fill="#217346"/>
<rect x="0" y="998" width="1600" height="2" fill="#8c5a68"/>
<path d="M142 998h72v2h-72zM375 998h71v2h-71zM529 998h73v2h-73zM607 998h74v2h-74z" fill="#d8c8cc"/><rect x="685" y="998" width="73" height="2" fill="#f4f4f4"/>
<text x="9" y="990" style="font-size:13.500px;fill:#eef5f0" textLength="41" lengthAdjust="spacingAndGlyphs">READY</text>
<rect x="1234.700" y="971" width="47.300" height="27" fill="#195c37"/>
<path d="M1249.500 977.500h15v14h-15zM1254.500 977.500v14M1259.500 977.500v14M1249.500 982h15M1249.500 987h15" fill="none" stroke="#fff" stroke-opacity=".9"/>
<path d="M1298 977.500h15.500v14h-15.500z" fill="none" stroke="#dfeee5" stroke-width="1.200"/><path d="M1301.500 981h8.500M1301.500 984.500h8.500M1301.500 988h8.500" stroke="#dfeee5"/>
<path d="M1345.500 977.500h16v14h-16z" fill="none" stroke="#eaf3ee" stroke-width="1.200"/><rect x="1345.500" y="977.500" width="5" height="9" fill="#eaf3ee"/><rect x="1353" y="977.500" width="8.500" height="9" fill="#eaf3ee"/>
<path d="M1383 984.500h7.500" stroke="#fff" stroke-width="2"/><path d="M1396 984.500H1522" stroke="#eaf3ee" stroke-width="1.200"/><rect x="1456" y="977" width="4" height="15" fill="#fff"/><path d="M1525 984.500h11M1530.500 979v11" stroke="#fff" stroke-width="2"/>
<text x="1556.600" y="989" style="font-size:13px;fill:#eef5f0" textLength="33.200" lengthAdjust="spacingAndGlyphs">100%</text>

<!-- watermark -->
<text x="899" y="950" style="font-family:'DejaVu Sans',sans-serif;font-size:68px;font-weight:bold;fill:#dcdcdc;stroke:#dcdcdc;stroke-width:3px;opacity:.75" textLength="192" lengthAdjust="spacingAndGlyphs" direction="rtl" unicode-bidi="bidi-override">نفذلي</text>
<text x="711" y="993" style="font-size:33px;fill:#b9d6c5;stroke:#b9d6c5;stroke-width:.7px" textLength="178" lengthAdjust="spacingAndGlyphs">nafezly.com</text>
</svg>
</body></html>
